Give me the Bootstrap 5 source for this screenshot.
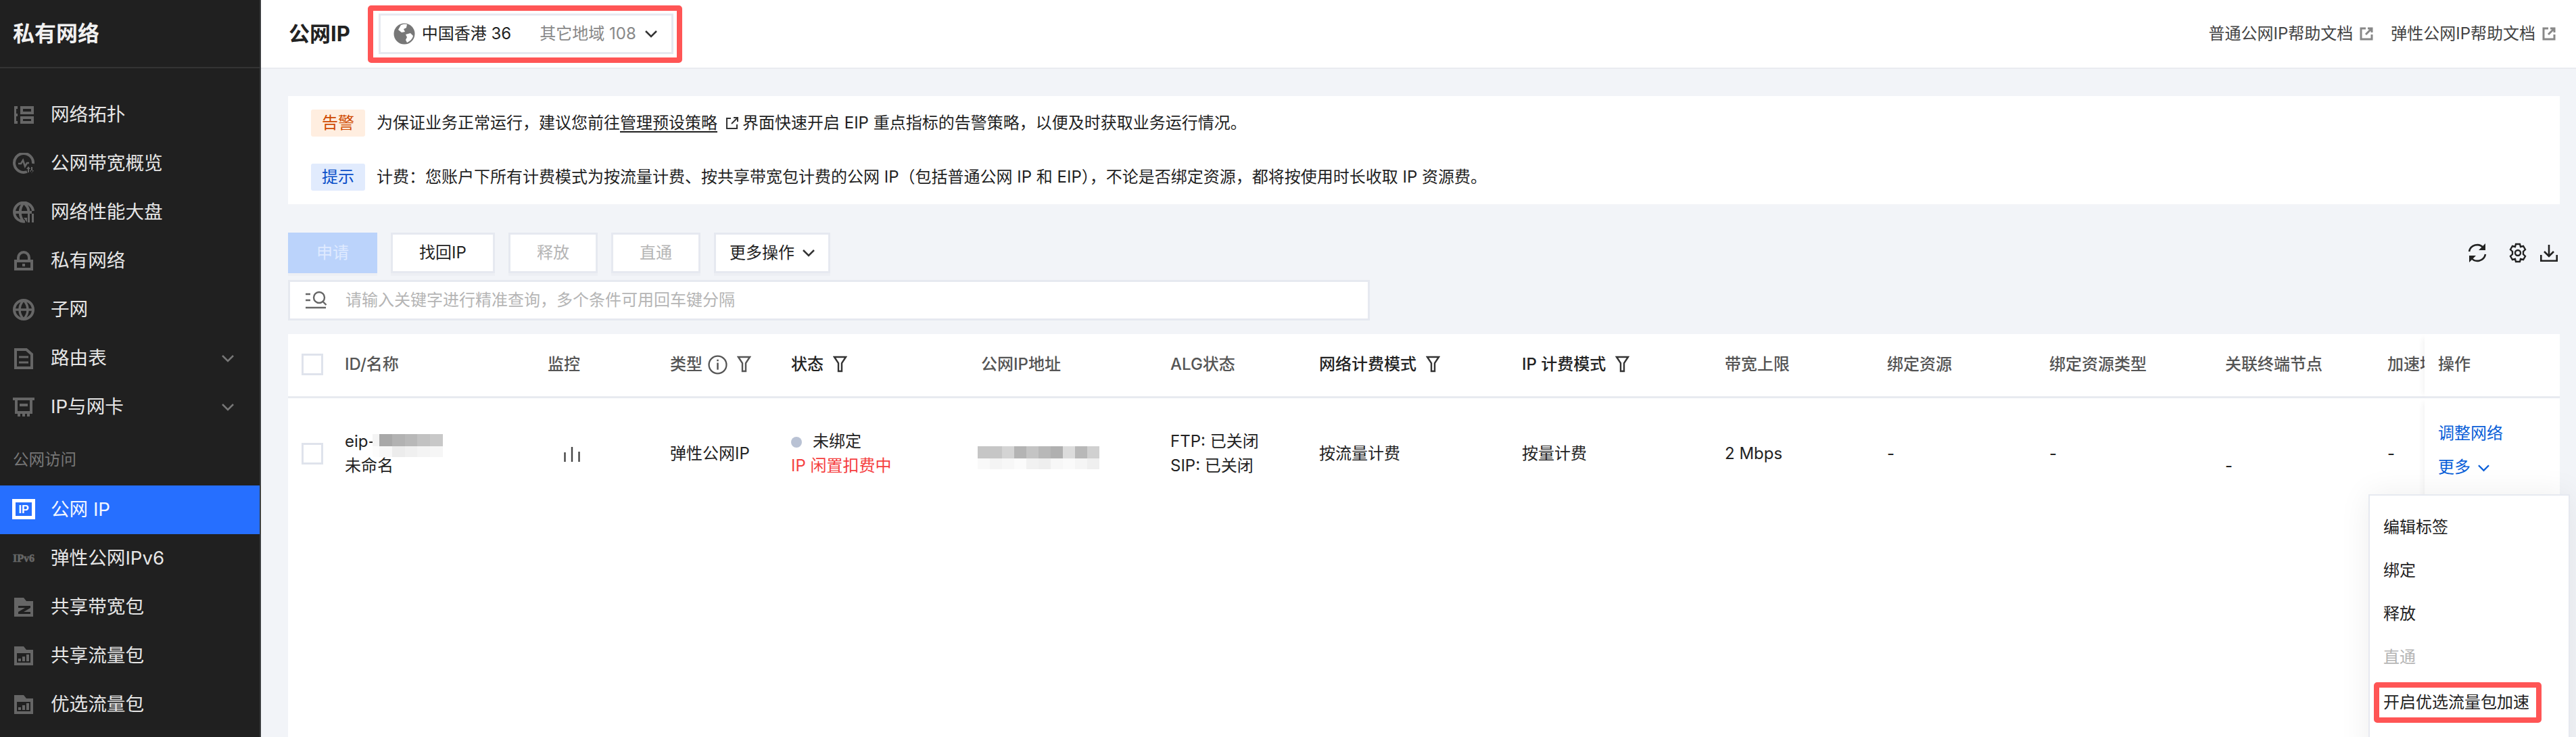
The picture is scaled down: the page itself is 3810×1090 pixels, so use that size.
<!DOCTYPE html>
<html lang="zh-CN"><head><meta charset="utf-8"><title>公网IP</title>
<link href="https://cdn.jsdelivr.net/npm/bootstrap@5.3.0/dist/css/bootstrap.min.css" rel="stylesheet">
<style>
html,body{height:1090px;overflow:hidden}
body{font-family:Inter,"Noto Sans CJK SC","Noto Sans",sans-serif;font-size:24px;color:#1f1f1f;background:#f2f4f8}
.shell{height:1090px}
.side{width:386px;flex:none;background:#202020;border-right:2px solid #3a3c3e;color:#e8e8e8}
.side-head{height:101px;border-bottom:2px solid #333;padding-left:19px;font-size:32px;font-weight:700;color:#f0f0f0}
.side-nav{padding-top:33px}
.side-item{height:72px;padding:0 38px 0 18px;font-size:27.6px;color:#e6e6e6;gap:23px}
.side-item svg.ico{width:34px;height:32px;flex:none;color:#666}
.side-item.on{background:#266fff;color:#f2f6ff}
.side-item.on svg.ico{color:#fff}
.side-label{height:80px;padding:0 0 21px 19px;font-size:23.5px;color:#777}
.chev{width:18px;height:12px;flex:none;margin-left:auto}
.side-item .chev{color:#777}
.main{min-width:0;background:#f2f4f8}
.topbar{height:102px;background:#fff;border-bottom:2px solid #e9ebf0;padding:0 30px 0 41px}
.page-title{font-size:31px;font-weight:700;color:#222;margin-right:26px;white-space:nowrap}
.mark-box{border:8px solid #f55;border-radius:5px}
.region-mark{padding:4px 5px 5px 8px}
.region{height:60px;width:436px;border:3px solid #e6e9f0;padding-left:19px;gap:10px;white-space:nowrap}
.region .oth{color:#888;margin-left:32px}
.region .chev{margin-left:3px}
.globe{width:32px;height:32px;flex:none}
.doc-link{color:#444;gap:10px;white-space:nowrap}
.ext{width:20px;height:20px;flex:none}
.docs{gap:26px}
.content{padding:40px 24px 0 40px;min-height:0}
.notice{background:#fff;height:160px;padding:20px 34px;gap:40px}
.tag-a,.tag-b{width:80px;height:40px;border-radius:3px;flex:none;margin-right:17px}
.tag-a{background:#ffeee0;color:#cf4a00}
.tag-b{background:#e1ebfd;color:#0a4fc9}
.notice-line{height:40px;white-space:nowrap}
.ulink{color:#1f1f1f;text-decoration:underline;text-underline-offset:4px;text-decoration-thickness:2px}
.inline-ext{width:20px;height:20px;margin:0 5px 0 12px;color:#333;flex:none}
.tools{margin-top:42px;height:60px;gap:20px}
.tbtn.btn{height:60px;border:3px solid #e6e9f0;background:#fff;color:#1f1f1f;border-radius:0;font-size:24px;padding:0;box-shadow:0 4px 0 #edeff4;--bs-btn-disabled-opacity:1;white-space:nowrap}
.tbtn.w132{width:132px}.tbtn.w154{width:154px}.tbtn.w172{width:172px;gap:12px}
.tbtn.btn:disabled{color:#b5b5b5;background:#fff;border-color:#e6e9f0}
.tbtn.btn.apply:disabled{background:#bbd3fb;border-color:#bbd3fb;color:#dfeaff}
.tool-ic{margin-right:3px;color:#222}
.tool-gear{margin:0 18px 0 30px}
.searchbox{margin-top:10px;height:60px;width:1600px;background:#fff;border:3px solid #e6e9f0;padding-left:23px;gap:27px;color:#b5b5b5}
.datacard{margin-top:20px;background:#fff;flex:1 1 auto;min-height:0;position:relative}
.scroller{overflow:hidden}
table.dtab{table-layout:fixed;width:3360px;max-width:none;border-collapse:separate;border-spacing:0;margin:0}
.dtab>thead>tr>th,.dtab>tbody>tr>td{padding:0 0 0 20px;white-space:nowrap;overflow:hidden;background:#fff;vertical-align:middle;font-size:24px;border-bottom:0;box-shadow:none}
.dtab>thead>tr>th{height:95px;border-bottom:3px solid #e8eaf0;font-weight:500;color:#555;padding-bottom:2px}
.dtab>thead>tr>th.dk{color:#222}
.dtab>tbody>tr>td{height:164px;color:#222;line-height:36px}
.dtab>thead>tr>th.fix,.dtab>tbody>tr>td.fix{position:sticky;right:0;box-shadow:-8px 0 8px -6px rgba(0,0,0,.06);overflow:visible}
.dtab>tbody>tr>td.fix{padding-bottom:10px;line-height:50px;color:#0a5fd8}
.more-chev{margin-left:11px;width:17px}
.cbx{width:32px;height:32px;border:3px solid #dfe3ec;background:#fff;display:block}
.flt{width:21px;height:26px;margin-left:14px;vertical-align:-5px}
.inf{width:29px;height:29px;margin-left:8px;vertical-align:-7px}
.dot{width:16px;height:16px;border-radius:50%;background:#b9c2d4;margin-right:16px;display:inline-block;vertical-align:-1px}
.idle{color:#f53e3e}
.mos{display:block;height:34px}
.mos1{width:104px;margin:7px 0 0 -5px;background:
 linear-gradient(90deg,#f4f4f4 0 10px,#a8a8a8 10px 29px,#b2b2b2 29px 48px,#b8b8b8 48px 66px,#c2c2c2 66px 85px,#c8c8c8 85px) top/100% 18px no-repeat,
 linear-gradient(90deg,#fcfcfc 0 10px,#f8f8f8 10px 29px,#ececec 29px 48px,#f0f0f0 48px 66px,#f4f4f4 66px 85px,#f6f6f6 85px) bottom/100% 16px no-repeat}
.mos2{width:180px;margin:12px 0 0 -5px;background:
 linear-gradient(90deg,#c6c6c6 0 18px,#c6c6c6 18px 36px,#d4d4d4 36px 54px,#b4b4b4 54px 72px,#c4c4c4 72px 90px,#b8b8b8 90px 108px,#b0b0b0 108px 126px,#dcdcdc 126px 144px,#b8b8b8 144px 162px,#d0d0d0 162px) top/100% 18px no-repeat,
 linear-gradient(90deg,#f9f9f9 0 18px,#f4f4f4 18px 36px,#f7f7f7 36px 54px,#fbfbfb 54px 72px,#f1f1f1 72px 90px,#eeeeee 90px 108px,#f7f7f7 108px 126px,#fafafa 126px 144px,#f5f5f5 144px 162px,#efefef 162px) bottom/100% 16px no-repeat}
.eip-row{height:36px}
.dtab>tbody>tr>td.nudge-d{padding-top:36px}
.popmenu{position:absolute;top:237px;right:-15px;width:298px;height:400px;background:#fff;border:2px solid #e6e9f0;box-shadow:0 0 44px rgba(0,0,0,.07);padding:17px 0 0 20px;z-index:5;list-style:none;margin:0}
.popmenu li{height:64px;line-height:60px;color:#222;white-space:nowrap}
.popmenu li.dis{color:#b5b5b5}
.popmenu li.item-mark{width:248px;height:60px;margin:3px 0 0 -14px;line-height:1;padding-left:6px}
</style></head>
<body>
<div class="shell d-flex">
<aside class="side d-flex flex-column">
 <div class="side-head d-flex align-items-center">私有网络</div>
 <nav class="side-nav d-flex flex-column">
  <a class="side-item d-flex align-items-center text-decoration-none"><svg class="ico" viewBox="0 0 34 32"><path fill="currentColor" d="M3 3h5v4H6v7h2v4H6v7h2v4H3zM12 3h20v12H12zm4 4v4h12V7zM12 18h20v11H12zm4 4v3h12v-3z"/></svg>网络拓扑</a>
  <a class="side-item d-flex align-items-center text-decoration-none"><svg class="ico" viewBox="0 0 34 32"><path fill="none" stroke="currentColor" stroke-width="4" d="M22 28A14 14 0 1 1 31 16"/><path fill="none" stroke="currentColor" stroke-width="2.6" d="M9 16h4l3-5 3 9 3-5h3"/><path fill="currentColor" d="M23 21h2v8h-2zM28 21h2v8h-2zM21 24l3-4 3 4zM26 26l3 4 3-4z"/></svg>公网带宽概览</a>
  <a class="side-item d-flex align-items-center text-decoration-none"><svg class="ico" viewBox="0 0 34 32"><path fill="none" stroke="currentColor" stroke-width="4" d="M19 29.500A14 14 0 1 1 31 14M3 16h26M17 2c-7 8-7 20 0 28M17 2c5 4 7 8 7.500 12"/><path fill="currentColor" d="M23 18h3v13h-3zM29 18h3v13h-3zM17 24h5v7z"/></svg>网络性能大盘</a>
  <a class="side-item d-flex align-items-center text-decoration-none"><svg class="ico" viewBox="0 0 34 32"><path fill-rule="evenodd" fill="currentColor" d="M3 14h28v16H3zm4 4v8h20v-8zM15 20h4v4h-4z"/><path fill="none" stroke="currentColor" stroke-width="4" d="M9 15v-4a8 8 0 0 1 16 0v4"/></svg>私有网络</a>
  <a class="side-item d-flex align-items-center text-decoration-none"><svg class="ico" viewBox="0 0 34 32"><circle cx="17" cy="16" r="14" fill="none" stroke="currentColor" stroke-width="4"/><path fill="none" stroke="currentColor" stroke-width="3.500" d="M3 16h28M17 2c-8 8-8 20 0 28M17 2c8 8 8 20 0 28"/></svg>子网</a>
  <a class="side-item d-flex align-items-center text-decoration-none"><svg class="ico" viewBox="0 0 34 32"><path fill="none" stroke="currentColor" stroke-width="4" d="M5 3h16l8 7v20H5z"/><path fill="none" stroke="currentColor" stroke-width="3" d="M10 14h14M10 22h14"/></svg>路由表<svg class="chev" viewBox="0 0 18 12"><path fill="none" stroke="currentColor" stroke-width="2.500" d="M1 2l8 8 8-8"/></svg></a>
  <a class="side-item d-flex align-items-center text-decoration-none"><svg class="ico" viewBox="0 0 34 32"><path fill-rule="evenodd" fill="currentColor" d="M1 2h32v4h-3v20H4V6H1zm7 4v16h18V6zM11 11h12v4H11zM8 26h4v4H8zM15 26h4v4h-4zM22 26h4v4h-4z"/></svg>IP与网卡<svg class="chev" viewBox="0 0 18 12"><path fill="none" stroke="currentColor" stroke-width="2.500" d="M1 2l8 8 8-8"/></svg></a>
  <div class="side-label d-flex align-items-end">公网访问</div>
  <a class="side-item on d-flex align-items-center text-decoration-none"><svg class="ico" viewBox="0 0 34 32"><rect x="2.500" y="2.500" width="29" height="25" fill="none" stroke="currentColor" stroke-width="5"/><text x="17" y="21" text-anchor="middle" font-family="Liberation Sans" font-weight="700" font-size="16" fill="currentColor">IP</text></svg>公网 IP</a>
  <a class="side-item d-flex align-items-center text-decoration-none"><svg class="ico" viewBox="0 0 34 32"><text x="17" y="21" text-anchor="middle" font-family="Liberation Serif" font-weight="700" font-size="16" fill="currentColor" stroke="currentColor" stroke-width=".6">IPv6</text></svg>弹性公网IPv6</a>
  <a class="side-item d-flex align-items-center text-decoration-none"><svg class="ico" viewBox="0 0 34 32"><path fill-rule="evenodd" fill="currentColor" d="M3 2h14l4 5h10v23H3zm6 12v3h10l-10 6v3h18v-3H17l10-6v-3z"/></svg>共享带宽包</a>
  <a class="side-item d-flex align-items-center text-decoration-none"><svg class="ico" viewBox="0 0 34 32"><path fill-rule="evenodd" fill="currentColor" d="M3 2h14l4 5h10v23H3zm4 10v14h20V12zM9 20h4v4H9zM15 17h4v7h-4zM21 14h4v10h-4z"/></svg>共享流量包</a>
  <a class="side-item d-flex align-items-center text-decoration-none"><svg class="ico" viewBox="0 0 34 32"><path fill-rule="evenodd" fill="currentColor" d="M3 2h14l4 5h10v23H3zm4 10v14h20V12zM9 20h4v4H9zM15 17h4v7h-4zM21 14h4v10h-4z"/></svg>优选流量包</a>
 </nav>
</aside>
<div class="main flex-grow-1 d-flex flex-column">
 <header class="topbar d-flex align-items-center flex-none">
  <div class="page-title">公网IP</div>
  <div class="mark-box region-mark"><div class="region d-flex align-items-center">
   <svg class="globe" viewBox="0 0 32 32"><circle cx="16" cy="16" r="15.500" fill="#777"/><path fill="#fff" d="M11 3c4-2 9-1 9-1l-1 5-4 2 2 4-5 1-5-4zM18 17l7-2 4 4c-1 5-5 8-9 10l-2-4 2-4z"/></svg>
   <span>中国香港 36</span><span class="oth">其它地域 108</span>
   <svg class="chev" viewBox="0 0 18 12"><path fill="none" stroke="#333" stroke-width="2.500" d="M1 2l8 8 8-8"/></svg>
  </div></div>
  <div class="docs d-flex ms-auto">
   <a class="doc-link d-flex align-items-center text-decoration-none">普通公网IP帮助文档<svg class="ext" viewBox="0 0 20 20"><path fill="none" stroke="#888" stroke-width="3" d="M9 2H2v16h16v-7M9 11l8-8M12 2h6v6"/></svg></a>
   <a class="doc-link d-flex align-items-center text-decoration-none">弹性公网IP帮助文档<svg class="ext" viewBox="0 0 20 20"><path fill="none" stroke="#888" stroke-width="3" d="M9 2H2v16h16v-7M9 11l8-8M12 2h6v6"/></svg></a>
  </div>
 </header>
 <div class="content flex-grow-1 d-flex flex-column">
  <section class="notice d-flex flex-column">
   <div class="notice-line d-flex align-items-center"><span class="tag-a d-flex align-items-center justify-content-center">告警</span>为保证业务正常运行&#xFF0C;建议您前往<a class="ulink">管理预设策略</a><svg class="inline-ext" viewBox="0 0 20 20"><path fill="none" stroke="currentColor" stroke-width="2" d="M8 3H2v15h15v-6M9 11l8-8M12 2h6v6"/></svg>界面快速开启 EIP 重点指标的告警策略&#xFF0C;以便及时获取业务运行情况&#x3002;</div>
   <div class="notice-line d-flex align-items-center"><span class="tag-b d-flex align-items-center justify-content-center">提示</span>计费&#xFF1A;您账户下所有计费模式为按流量计费&#x3001;按共享带宽包计费的公网 IP&#xFF08;包括普通公网 IP 和 EIP&#xFF09;&#xFF0C;不论是否绑定资源&#xFF0C;都将按使用时长收取 IP 资源费&#x3002;</div>
  </section>
  <div class="tools d-flex align-items-center">
   <button class="tbtn btn apply w132" disabled>申请</button>
   <button class="tbtn btn w154">找回IP</button>
   <button class="tbtn btn w132" disabled>释放</button>
   <button class="tbtn btn w132" disabled>直通</button>
   <button class="tbtn btn w172 d-flex align-items-center justify-content-center">更多操作<svg class="chev ms-0" viewBox="0 0 18 12"><path fill="none" stroke="#333" stroke-width="2.500" d="M1 2l8 8 8-8"/></svg></button>
   <div class="tool-ic d-flex align-items-center ms-auto">
    <svg width="30" height="30" viewBox="0 0 30 30"><path fill="none" stroke="currentColor" stroke-width="2.600" d="M3 13A12 12 0 0 1 24 7.500M27 17A12 12 0 0 1 6 22.500"/><path fill="currentColor" d="M27 1v10H17zM3 29V19h10z"/></svg>
    <svg class="tool-gear" width="30" height="30" viewBox="0 0 30 30"><path fill="none" stroke="currentColor" stroke-width="2.400" d="M12 2h6l1 4 4-1 3 5-3 3v4l3 3-3 5-4-1-1 4h-6l-1-4-4 1-3-5 3-3v-4L4 10l3-5 4 1z"/><circle cx="15" cy="15" r="4" fill="none" stroke="currentColor" stroke-width="2.400"/></svg>
    <svg width="26" height="26" viewBox="0 0 26 26"><path fill="none" stroke="currentColor" stroke-width="2.600" d="M13 1v17M6 11l7 7 7-7M1.300 16v8.700h23.400V16"/></svg>
   </div>
  </div>
  <div class="searchbox d-flex align-items-center flex-none">
   <svg width="32" height="28" viewBox="0 0 32 28"><path fill="none" stroke="#666" stroke-width="2.400" d="M0 5h7M0 14h7M0 25h30"/><circle cx="20" cy="10" r="8" fill="none" stroke="#666" stroke-width="2.400"/><path stroke="#666" stroke-width="2.400" d="M25.500 16l5 5"/></svg>
   <span>请输入关键字进行精准查询&#xFF0C;多个条件可用回车键分隔</span>
  </div>
  <div class="datacard">
   <div class="scroller h-100">
   <table class="table dtab">
    <colgroup><col style="width:64px"><col style="width:300px"><col style="width:181px"><col style="width:179px"><col style="width:281px"><col style="width:280px"><col style="width:220px"><col style="width:300px"><col style="width:300px"><col style="width:240px"><col style="width:240px"><col style="width:260px"><col style="width:240px"><col style="width:75px"><col style="width:200px"></colgroup>
    <thead><tr>
     <th><span class="cbx"></span></th><th>ID/名称</th><th>监控</th>
     <th>类型<svg class="inf" viewBox="0 0 28 28"><circle cx="14" cy="14" r="12.500" fill="none" stroke="#555" stroke-width="2.200"/><path fill="#555" d="M12.800 11h2.400v10h-2.400zM12.800 6.500h2.400V9h-2.400z"/></svg><svg class="flt" viewBox="0 0 20 26"><path fill="none" stroke="#555" stroke-width="2.400" d="M1.500 2h17l-6 9v12h-5V11z"/></svg></th>
     <th class="dk">状态<svg class="flt" viewBox="0 0 20 26"><path fill="none" stroke="#333" stroke-width="2.400" d="M1.500 2h17l-6 9v12h-5V11z"/></svg></th>
     <th>公网IP地址</th><th>ALG状态</th>
     <th class="dk">网络计费模式<svg class="flt" viewBox="0 0 20 26"><path fill="none" stroke="#333" stroke-width="2.400" d="M1.500 2h17l-6 9v12h-5V11z"/></svg></th>
     <th class="dk">IP 计费模式<svg class="flt" viewBox="0 0 20 26"><path fill="none" stroke="#333" stroke-width="2.400" d="M1.500 2h17l-6 9v12h-5V11z"/></svg></th>
     <th>带宽上限</th><th>绑定资源</th><th>绑定资源类型</th><th>关联终端节点</th><th>加速地域</th><th class="fix">操作</th>
    </tr></thead>
    <tbody><tr>
     <td><span class="cbx"></span></td>
     <td><div class="eip-row d-flex align-items-start"><span>eip-</span><span class="mos mos1"></span></div>未命名</td>
     <td><svg width="24" height="22" viewBox="0 0 24 22" class="ms-4"><path stroke="#444" stroke-width="2.400" d="M1.500 8v14M12 0v22M22.500 7v15"/></svg></td>
     <td>弹性公网IP</td>
     <td><span class="dot"></span>未绑定<br><span class="idle">IP 闲置扣费中</span></td>
     <td><span class="mos mos2"></span></td>
     <td>FTP: 已关闭<br>SIP: 已关闭</td>
     <td>按流量计费</td><td>按量计费</td><td>2 Mbps</td><td>-</td><td>-</td><td class="nudge-d">-</td><td>-</td>
     <td class="fix">调整网络<br>更多<svg class="chev more-chev" viewBox="0 0 18 12"><path fill="none" stroke="currentColor" stroke-width="2.500" d="M1 2l8 8 8-8"/></svg></td>
    </tr></tbody>
   </table>
   </div>
   <ul class="popmenu">
    <li>编辑标签</li><li>绑定</li><li>释放</li><li class="dis">直通</li>
    <li class="mark-box item-mark d-flex align-items-center">开启优选流量包加速</li>
   </ul>
  </div>
 </div>
</div>
</div>
<script src="https://cdn.jsdelivr.net/npm/bootstrap@5.3.0/dist/js/bootstrap.bundle.min.js"></script>
</body></html>
